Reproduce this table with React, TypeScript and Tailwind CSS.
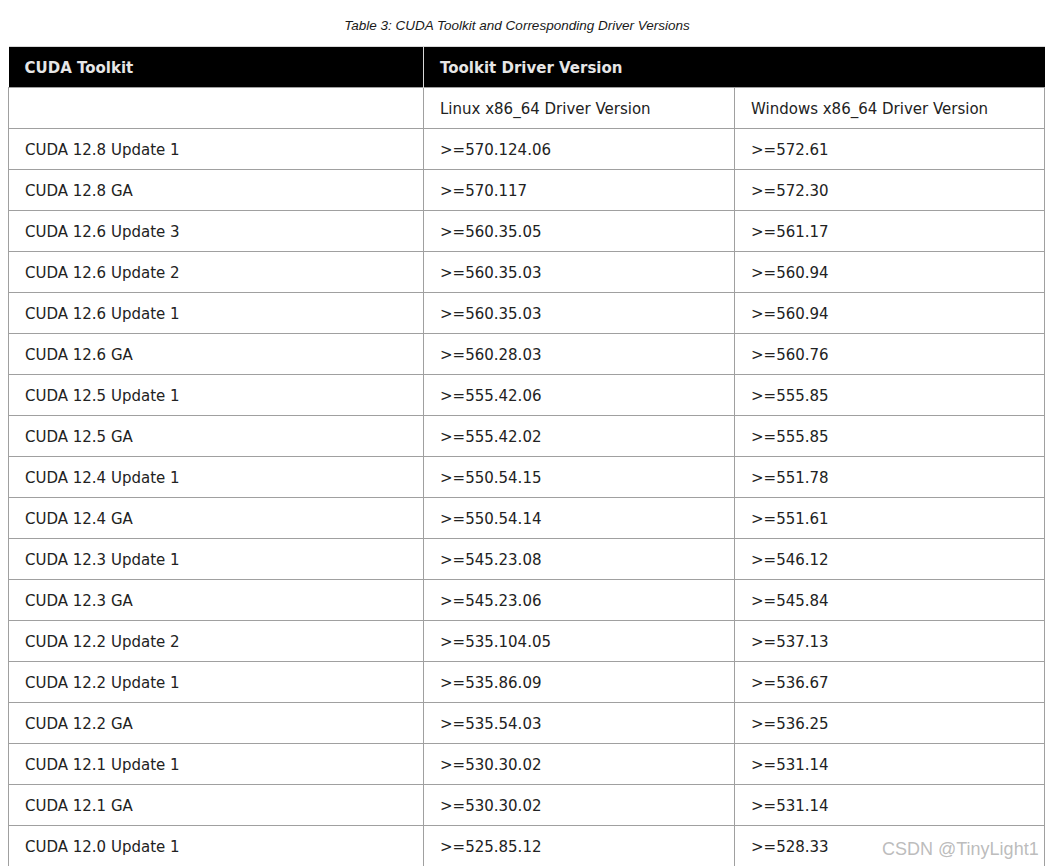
import React from "react";

const rows: [string, string, string][] = [
  ["CUDA 12.8 Update 1", ">=570.124.06", ">=572.61"],
  ["CUDA 12.8 GA", ">=570.117", ">=572.30"],
  ["CUDA 12.6 Update 3", ">=560.35.05", ">=561.17"],
  ["CUDA 12.6 Update 2", ">=560.35.03", ">=560.94"],
  ["CUDA 12.6 Update 1", ">=560.35.03", ">=560.94"],
  ["CUDA 12.6 GA", ">=560.28.03", ">=560.76"],
  ["CUDA 12.5 Update 1", ">=555.42.06", ">=555.85"],
  ["CUDA 12.5 GA", ">=555.42.02", ">=555.85"],
  ["CUDA 12.4 Update 1", ">=550.54.15", ">=551.78"],
  ["CUDA 12.4 GA", ">=550.54.14", ">=551.61"],
  ["CUDA 12.3 Update 1", ">=545.23.08", ">=546.12"],
  ["CUDA 12.3 GA", ">=545.23.06", ">=545.84"],
  ["CUDA 12.2 Update 2", ">=535.104.05", ">=537.13"],
  ["CUDA 12.2 Update 1", ">=535.86.09", ">=536.67"],
  ["CUDA 12.2 GA", ">=535.54.03", ">=536.25"],
  ["CUDA 12.1 Update 1", ">=530.30.02", ">=531.14"],
  ["CUDA 12.1 GA", ">=530.30.02", ">=531.14"],
  ["CUDA 12.0 Update 1", ">=525.85.12", ">=528.33"],
];

const cell = "h-[41px] px-4 pt-[3px] border border-[#a0a0a0] text-left align-middle font-normal";

export default function App() {
  return (
    <div className="relative h-[866px] overflow-hidden bg-white text-[#222] font-['DejaVu_Sans',sans-serif]">
      <p className="pt-[16px] pb-[10px] pr-[22px] leading-[20px] text-center text-[13.5px] italic text-[#1a1a1a] font-['Liberation_Sans',sans-serif]">
        Table 3: CUDA Toolkit and Corresponding Driver Versions
      </p>
      <div className="px-2">
        <table className="w-[1036px] border-collapse table-fixed text-[15px]">
          <colgroup>
            <col className="w-[415px]" />
            <col className="w-[311px]" />
            <col className="w-[310px]" />
          </colgroup>
          <thead>
            <tr className="bg-black text-[#e6e6e6]">
              <th className="h-[41px] px-4 pt-[2px] text-left font-bold border-t border-t-[#d8d8d8]">CUDA Toolkit</th>
              <th colSpan={2} className="h-[41px] px-4 pt-[2px] text-left font-bold border-t border-t-[#d8d8d8] border-l border-l-[#d8d8d8]">
                Toolkit Driver Version
              </th>
            </tr>
          </thead>
          <tbody>
            <tr>
              <td className={cell}></td>
              <td className={cell}>Linux x86_64 Driver Version</td>
              <td className={cell}>Windows x86_64 Driver Version</td>
            </tr>
            {rows.map((r) => (
              <tr key={r[0]}>
                <td className={cell}>{r[0]}</td>
                <td className={cell}>{r[1]}</td>
                <td className={cell}>{r[2]}</td>
              </tr>
            ))}
          </tbody>
        </table>
      </div>
      <span className="absolute left-[882px] top-[836px] text-[18px] text-[#b4b4b4]/90 font-['Liberation_Sans',sans-serif]">
        CSDN @TinyLight1
      </span>
    </div>
  );
}
